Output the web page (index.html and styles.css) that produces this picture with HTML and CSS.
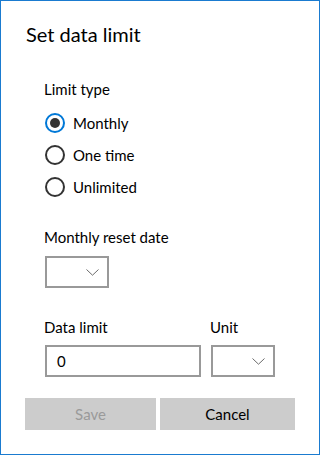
FILE: index.html
```html
<!DOCTYPE html>
<html>
<head>
<meta charset="utf-8">
<link rel="stylesheet" href="styles.css">
</head>
<body>
<div class="window">
  <h1 class="title">Set data limit</h1>
  <div class="content">
    <div class="label label-first">Limit type</div>
    <div class="radios">
      <div class="radio-row"><span class="radio checked"><span class="dot"></span></span><span class="radio-text">Monthly</span></div>
      <div class="radio-row"><span class="radio"></span><span class="radio-text">One time</span></div>
      <div class="radio-row"><span class="radio"></span><span class="radio-text">Unlimited</span></div>
    </div>
    <div class="label label-reset">Monthly reset date</div>
    <div class="select select-date">
      <svg class="chev" width="13" height="7" viewBox="0 0 13 7"><polyline points="0.5,0.5 6.5,6.2 12.5,0.5" fill="none" stroke="#6b6b6b" stroke-width="1"/></svg>
    </div>
    <div class="limit-row">
      <div class="col col-limit">
        <div class="label">Data limit</div>
        <div class="input">0</div>
      </div>
      <div class="col col-unit">
        <div class="label">Unit</div>
        <div class="select select-unit">
          <svg class="chev" width="13" height="7" viewBox="0 0 13 7"><polyline points="0.5,0.5 6.5,6.2 12.5,0.5" fill="none" stroke="#6b6b6b" stroke-width="1"/></svg>
        </div>
      </div>
    </div>
  </div>
  <div class="buttons">
    <div class="btn btn-save">Save</div>
    <div class="btn btn-cancel">Cancel</div>
  </div>
</div>
</body>
</html>
```
FILE: styles.css
```css
html, body {
  margin: 0;
  padding: 0;
  background: #ffffff;
}
.window {
  box-sizing: border-box;
  width: 320px;
  height: 455px;
  border: 1px solid #1a7bd0;
  background: #ffffff;
  font-family: "Lato", "Noto Sans", sans-serif;
  color: #000000;
  display: flex;
  flex-direction: column;
  padding: 19px 24px 0 24px;
}
.title {
  margin: 0;
  font-size: 20px;
  line-height: 28px;
  font-weight: 400;
  padding-left: 1px;
}
.content {
  padding-left: 20px;
  display: flex;
  flex-direction: column;
}
.label {
  font-size: 15px;
  line-height: 20px;
  margin-left: -1px;
}
.label-first {
  margin-top: 31px;
}
.radios {
  margin-top: 8px;
  display: flex;
  flex-direction: column;
}
.radio-row {
  height: 32px;
  display: flex;
  align-items: center;
}
.radio {
  box-sizing: border-box;
  width: 20px;
  height: 20px;
  border: 2px solid #333333;
  border-radius: 50%;
  display: flex;
  align-items: center;
  justify-content: center;
}
.radio.checked {
  border-color: #0078d7;
}
.dot {
  width: 10px;
  height: 10px;
  border-radius: 50%;
  background: #333333;
}
.radio-text {
  font-size: 15px;
  line-height: 20px;
  margin-left: 8px;
}
.label-reset {
  margin-top: 24px;
}
.select {
  box-sizing: border-box;
  width: 64px;
  height: 32px;
  border: 2px solid #999999;
  display: flex;
  align-items: center;
  justify-content: flex-end;
  padding-right: 8px;
}
.select-date {
  margin-top: 9px;
}
.chev {
  display: block;
  margin-top: 1px;
}
.limit-row {
  margin-top: 29px;
  display: flex;
  gap: 10px;
}
.col {
  display: flex;
  flex-direction: column;
  gap: 8px;
}
.input {
  box-sizing: border-box;
  width: 156px;
  height: 32px;
  border: 2px solid #999999;
  font-size: 15px;
  line-height: 28px;
  padding-left: 10px;
}
.buttons {
  margin-top: 21px;
  display: grid;
  grid-template-columns: 131px 135px;
  gap: 4px;
}
.btn {
  height: 32px;
  background: #cccccc;
  font-size: 15px;
  line-height: 32px;
  text-align: center;
}
.btn-save {
  color: #9a9a9a;
}
.btn-cancel {
  color: #000000;
}
```
